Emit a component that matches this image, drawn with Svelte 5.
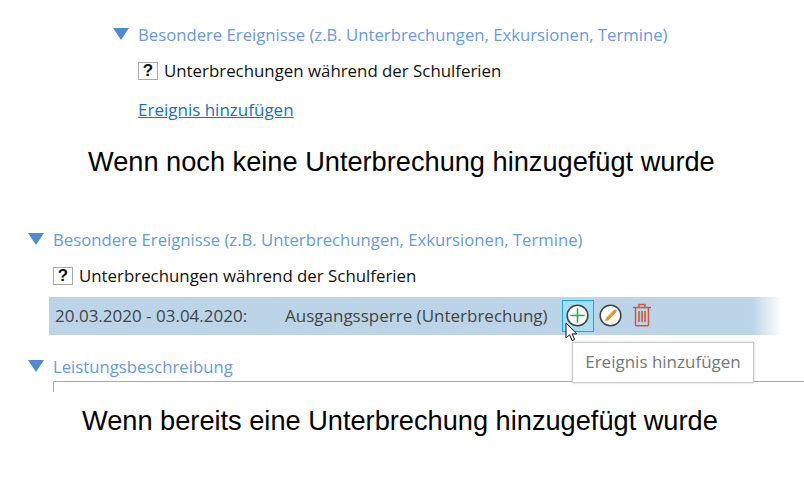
<script>
  const title = 'Besondere Ereignisse (z.B. Unterbrechungen, Exkursionen, Termine)';
  const sub = 'Unterbrechungen während der Schulferien';
</script>

<div class="page">
  <section class="block first">
    <div class="head">
      <svg class="tri" viewBox="0 0 16 12" width="16" height="12"><path d="M0 0H16L8 12Z" /></svg>
      <span>{title}</span>
    </div>
    <div class="check"><span class="q">?</span><span>{sub}</span></div>
    <a class="link" href="#x">Ereignis hinzufügen</a>
  </section>
  <h2 class="cap one">Wenn noch keine Unterbrechung hinzugefügt wurde</h2>

  <section class="block second">
    <div class="head">
      <svg class="tri" viewBox="0 0 16 12" width="16" height="12"><path d="M0 0H16L8 12Z" /></svg>
      <span>{title}</span>
    </div>
    <div class="check"><span class="q">?</span><span>{sub}</span></div>
    <div class="row">
      <span class="date">20.03.2020 - 03.04.2020:</span>
      <span class="desc">Ausgangssperre (Unterbrechung)</span>
      <span class="btn active">
        <svg viewBox="0 0 24 24" width="23" height="23">
          <circle cx="12" cy="12" r="10.8" fill="#fff" stroke="#444" stroke-width="1.6" />
          <path d="M12 4.5V19.5M4.5 12H19.5" stroke="#22ab55" stroke-width="1.6" fill="none" />
        </svg>
      </span>
      <span class="btn">
        <svg viewBox="0 0 24 24" width="23" height="23">
          <circle cx="12" cy="12" r="10.8" fill="#fff" stroke="#444" stroke-width="1.6" />
          <path d="M6 18.2 7.3 14.6 15.4 6.4C16.2 5.6 17.2 5.6 17.9 6.3 18.6 7 18.6 8 17.8 8.8L9.7 17Z" fill="#e39a2d" />
        </svg>
      </span>
      <span class="btn trash">
        <svg viewBox="0 0 20 24" width="20" height="24" fill="none" stroke="#d2553c">
          <path d="M1 4.5H19M7 4.5V1.5H13V4.5" stroke-width="1.5" />
          <path d="M3.5 4.5V21.5C3.5 22.2 4 22.8 4.5 22.8H15.5C16 22.8 16.5 22.2 16.5 21.5V4.5" stroke-width="1.5" />
          <path d="M7 8V19M10 8V19M13 8V19" stroke-width="1.6" />
        </svg>
      </span>
      <div class="tip">Ereignis hinzufügen</div>
      <svg class="cursor" viewBox="0 0 13 21" width="13" height="21">
        <path d="M1 1V16L4.6 12.8 7 18.6 9.6 17.5 7.2 11.9H12Z" fill="#fff" stroke="#111" stroke-width="1" />
      </svg>
    </div>
    <div class="head lower">
      <svg class="tri" viewBox="0 0 16 12" width="16" height="12"><path d="M0 0H16L8 12Z" /></svg>
      <span>Leistungsbeschreibung</span>
    </div>
    <div class="field"></div>
  </section>
  <h2 class="cap two">Wenn bereits eine Unterbrechung hinzugefügt wurde</h2>
</div>

<style>
  :global(body) {
    margin: 0;
    background: #fff;
  }
  .page {
    width: 804px;
    height: 496px;
    overflow: hidden;
    font-family: "Open Sans", "Noto Sans", sans-serif;
    font-size: 17px;
  }
  .block.first {
    padding: 25px 0 0 113px;
  }
  .block.second {
    padding: 0 0 0 28px;
    margin-top: 53px;
  }
  .head {
    display: flex;
    align-items: flex-start;
    gap: 9px;
    height: 20px;
    line-height: 20px;
    font-size: 16.72px;
    color: #6a9ad8;
    white-space: nowrap;
  }
  .tri {
    fill: #4f8bd0;
    margin-top: 3px;
    flex: none;
  }
  .check {
    display: flex;
    align-items: center;
    gap: 6px;
    margin: 16px 0 0 25px;
    height: 20px;
    line-height: 20px;
    font-size: 16.85px;
    color: #111;
  }
  .q {
    box-sizing: border-box;
    width: 20px;
    height: 18px;
    border: 1px solid #aaa;
    background: #fff;
    text-align: center;
    font-weight: 700;
    font-size: 17px;
    line-height: 16px;
    font-family: "Liberation Sans", sans-serif;
  }
  .link {
    display: block;
    margin: 19px 0 0 25px;
    color: #1a6fc4;
    line-height: 20px;
  }
  .cap {
    margin: 0;
    font-family: "Liberation Sans", sans-serif;
    font-weight: 400;
    font-size: 27.2px;
    line-height: 30px;
    color: #000;
    white-space: nowrap;
  }
  .cap.one {
    margin: 27px 0 0 88px;
  }
  .cap.two {
    margin: 14px 0 0 82px;
  }
  .row {
    position: relative;
    display: flex;
    align-items: center;
    height: 38px;
    margin: 11px 0 0 21px;
    padding-left: 6px;
    width: 733px;
    box-sizing: border-box;
    background: linear-gradient(to right, #bbd4e8 0, #bbd4e8 702px, #fff 100%);
    color: #444;
  }
  .date {
    width: 230px;
    flex: none;
    white-space: nowrap;
    margin-bottom: 2px;
  }
  .desc {
    width: 277px;
    flex: none;
    white-space: nowrap;
    margin-bottom: 2px;
  }
  .btn {
    box-sizing: border-box;
    display: flex;
    align-items: center;
    justify-content: center;
    width: 32px;
    height: 32px;
    flex: none;
  }
  .btn svg {
    margin-bottom: 2px;
  }
  .btn.active {
    background: #a7dcf5;
    border: 1px solid #19a7e0;
  }
  .btn.active svg {
    margin-right: 2px;
  }
  .tip {
    position: absolute;
    left: 523px;
    top: 45px;
    width: 182px;
    height: 41px;
    box-sizing: border-box;
    background: #fff;
    border: 1px solid #ccc;
    box-shadow: 0 0 2px #c4c4c4;
    color: #777;
    line-height: 38px;
    text-align: center;
    z-index: 2;
  }
  .cursor {
    position: absolute;
    left: 516px;
    top: 25px;
    z-index: 3;
  }
  .head.lower {
    margin-top: 22px;
  }
  .field {
    margin: 4px 0 0 25px;
    height: 10px;
    border-top: 1px solid #aaa;
    border-left: 1px solid #aaa;
    width: 760px;
  }
</style>
